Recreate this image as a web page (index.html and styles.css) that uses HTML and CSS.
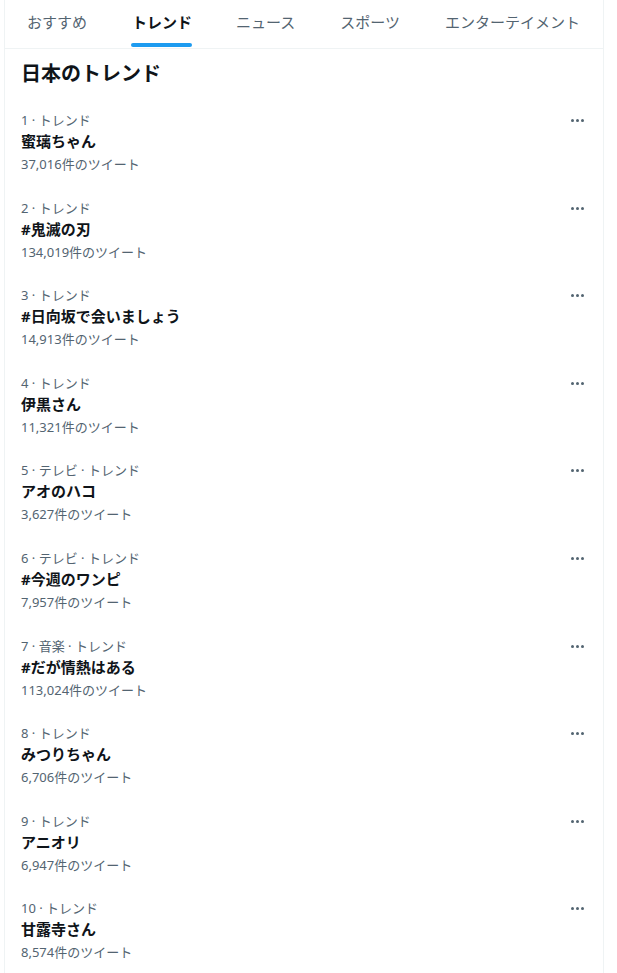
FILE: index.html
```html
<!DOCTYPE html>
<html lang="ja">
<head>
<meta charset="utf-8">
<link rel="stylesheet" href="styles.css">
</head>
<body>
<div class="panel">
  <nav class="tabs">
    <div class="tab">おすすめ</div>
    <div class="tab active"><span>トレンド</span></div>
    <div class="tab">ニュース</div>
    <div class="tab">スポーツ</div>
    <div class="tab">エンターテイメント</div>
  </nav>
  <h2 class="title">日本のトレンド</h2>
  <ul class="list">
    <li class="item"><div class="text"><div class="meta">1 · トレンド</div><div class="name">蜜璃ちゃん</div><div class="count">37,016件のツイート</div></div><div class="more"><i></i><i></i><i></i></div></li>
    <li class="item"><div class="text"><div class="meta">2 · トレンド</div><div class="name">#鬼滅の刃</div><div class="count">134,019件のツイート</div></div><div class="more"><i></i><i></i><i></i></div></li>
    <li class="item"><div class="text"><div class="meta">3 · トレンド</div><div class="name">#日向坂で会いましょう</div><div class="count">14,913件のツイート</div></div><div class="more"><i></i><i></i><i></i></div></li>
    <li class="item"><div class="text"><div class="meta">4 · トレンド</div><div class="name">伊黒さん</div><div class="count">11,321件のツイート</div></div><div class="more"><i></i><i></i><i></i></div></li>
    <li class="item"><div class="text"><div class="meta">5 · テレビ · トレンド</div><div class="name">アオのハコ</div><div class="count">3,627件のツイート</div></div><div class="more"><i></i><i></i><i></i></div></li>
    <li class="item"><div class="text"><div class="meta">6 · テレビ · トレンド</div><div class="name">#今週のワンピ</div><div class="count">7,957件のツイート</div></div><div class="more"><i></i><i></i><i></i></div></li>
    <li class="item"><div class="text"><div class="meta">7 · 音楽 · トレンド</div><div class="name">#だが情熱はある</div><div class="count">113,024件のツイート</div></div><div class="more"><i></i><i></i><i></i></div></li>
    <li class="item"><div class="text"><div class="meta">8 · トレンド</div><div class="name">みつりちゃん</div><div class="count">6,706件のツイート</div></div><div class="more"><i></i><i></i><i></i></div></li>
    <li class="item"><div class="text"><div class="meta">9 · トレンド</div><div class="name">アニオリ</div><div class="count">6,947件のツイート</div></div><div class="more"><i></i><i></i><i></i></div></li>
    <li class="item"><div class="text"><div class="meta">10 · トレンド</div><div class="name">甘露寺さん</div><div class="count">8,574件のツイート</div></div><div class="more"><i></i><i></i><i></i></div></li>
  </ul>
</div>
</body>
</html>
```
FILE: styles.css
```css
html, body {
  margin: 0;
  padding: 0;
  background: #ffffff;
}
body {
  font-family: "Noto Sans", "Noto Sans CJK JP", sans-serif;
  color: #0f1419;
}
.panel {
  margin-left: 4px;
  width: 598px;
  border-left: 1px solid #eff3f4;
  border-right: 1px solid #eff3f4;
  min-height: 973px;
}
.tabs {
  display: flex;
  border-bottom: 1px solid #eff3f4;
  padding-left: 22px;
  box-sizing: border-box;
  height: 49px;
}
.tab {
  position: relative;
  flex-shrink: 0;
  white-space: nowrap;
  font-size: 15px;
  color: #536471;
  line-height: 20px;
  padding-top: 12px;
  margin-right: 45px;
}
.tab.active {
  color: #0f1419;
  font-weight: 700;
  margin-right: 44px;
}
.tab.active::after {
  content: "";
  position: absolute;
  left: -1px;
  right: 0;
  top: 43px;
  height: 4px;
  border-radius: 2px;
  background: #1d9bf0;
}
.title {
  margin: 0;
  padding: 13px 16px 0 16px;
  font-size: 20px;
  font-weight: 700;
  line-height: 24px;
  height: 48px;
  box-sizing: border-box;
}
.list {
  list-style: none;
  margin: 0;
  padding: 0;
}
.item {
  display: flex;
  justify-content: space-between;
  height: 87.6px;
  padding: 14px 16px 0 16px;
  box-sizing: border-box;
}
.meta, .count {
  font-size: 13px;
  color: #536471;
  line-height: 18px;
}
.name {
  font-size: 15px;
  font-weight: 700;
  line-height: 24px;
  margin-bottom: 2px;
}
.more {
  display: flex;
  gap: 2px;
  padding-top: 8px;
  padding-right: 3px;
}
.more i {
  width: 3px;
  height: 3px;
  border-radius: 50%;
  background: #536471;
}
```
